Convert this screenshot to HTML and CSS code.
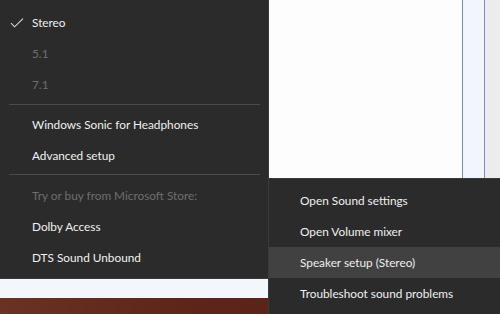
FILE: index.html
```html
<!DOCTYPE html>
<html lang="en">
<head>
    <meta charset="UTF-8">
    <meta name="viewport" content="width=device-width, initial-scale=1.0">
    <title>Sound menu</title>
    <link rel="stylesheet" href="styles.css">
</head>
<body>
    <div class="desk">
        <!-- window behind the menus -->
        <div class="window">
            <div class="pane">
                <div class="page"></div>
                <div class="status"></div>
            </div>
            <div class="sidebar"></div>
            <div class="edge"></div>
        </div>
        <div class="wallpaper"></div>

        <!-- speaker format menu -->
        <div class="menu menu-left">
            <div class="item checked">
                <svg class="check" width="14" height="10" viewBox="0 0 14 10">
                    <path d="M1 5.2 L4.6 8.8 L13 0.6" fill="none" stroke="#d8d8d8" stroke-width="1.1"/>
                </svg>
                Stereo
            </div>
            <div class="item disabled">5.1</div>
            <div class="item disabled">7.1</div>
            <div class="sep"></div>
            <div class="item">Windows Sonic for Headphones</div>
            <div class="item">Advanced setup</div>
            <div class="sep sep-store"></div>
            <div class="item disabled">Try or buy from Microsoft Store:</div>
            <div class="item">Dolby Access</div>
            <div class="item">DTS Sound Unbound</div>
        </div>

        <!-- tray context menu -->
        <div class="menu menu-right">
            <div class="item">Open Sound settings</div>
            <div class="item">Open Volume mixer</div>
            <div class="item hover">Speaker setup (Stereo)</div>
            <div class="item">Troubleshoot sound problems</div>
        </div>
    </div>
</body>
</html>
```

FILE: styles.css
```css
body {
    margin: 0;
    font-family: "Segoe UI", Lato, "Noto Sans", sans-serif;
    background: #2b2b2b;
    overflow: hidden;
}
.desk {
    position: relative;
    width: 500px;
    height: 314px;
    overflow: hidden;
    display: flex;
    flex-direction: column;
}
.window {
    height: 298px;
    display: flex;
}
.pane {
    flex: 1;
    display: flex;
    flex-direction: column;
}
.page {
    flex: 1;
    background: #fdfdfd;
}
.status {
    height: 20px;
    background: #f3f6fb;
    border-top: 1px solid #8a8a8a;
}
.sidebar {
    width: 21px;
    background: #f2f6fc;
    border-left: 1px solid #6f8fcc;
    border-right: 1px solid #6f8fcc;
}
.edge {
    width: 15px;
    background: #ececec;
}
.wallpaper {
    flex: 1;
    background: linear-gradient(90deg, #6a3222 0%, #5d2519 40%, #56201a 100%);
}
.menu {
    position: absolute;
    background: #2b2b2b;
    border: 1px solid #3a3a3a;
    box-sizing: border-box;
    color: #f0f0f0;
    font-size: 11.8px;
}
.menu-left {
    left: -1px;
    top: -1px;
    width: 270px;
    height: 280px;
    padding-top: 7px;
}
.menu-right {
    left: 268px;
    top: 178px;
    width: 240px;
    height: 150px;
    padding-top: 6px;
}
.item {
    position: relative;
    height: 31px;
    line-height: 31px;
    padding-left: 32px;
    white-space: nowrap;
}
.menu-right .item {
    padding-left: 31px;
}
.item.disabled {
    color: #6e6e6e;
}
.item.hover {
    background: #414141;
}
.check {
    position: absolute;
    left: 10px;
    top: 11px;
}
.sep {
    height: 1px;
    background: #4a4a4a;
    margin: 4px 8px 4px 9px;
}
.sep-store {
    margin: 3px 8px 5px 9px;
}
```
